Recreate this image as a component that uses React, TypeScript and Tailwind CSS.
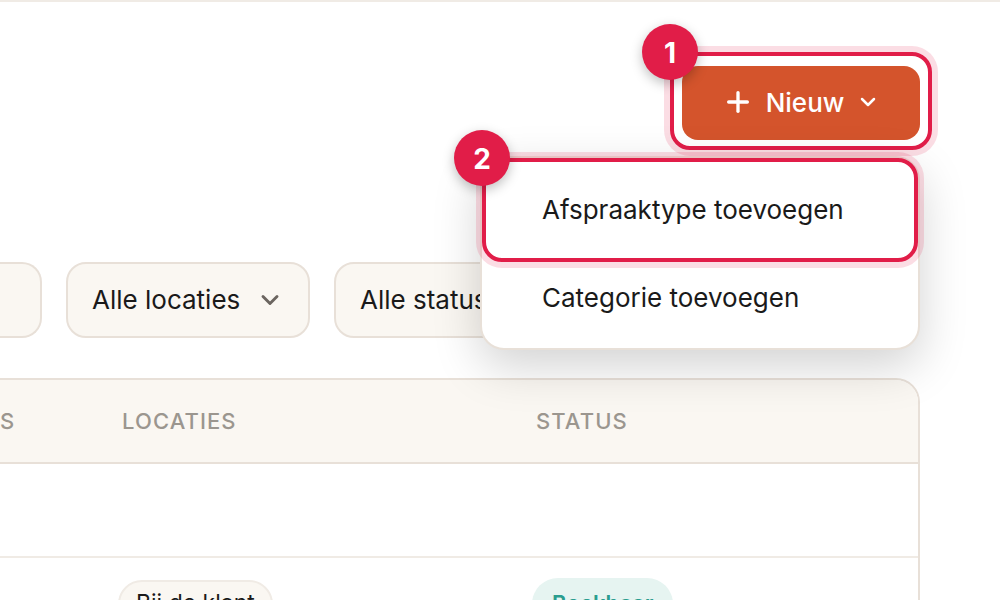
import React from 'react';
import { ChevronDown, Plus } from 'lucide-react';

interface FilterSelectProps {
  label: string;
  options: string[];
  className: string;
}

const FilterSelect: React.FC<FilterSelectProps> = ({ label, options, className }) => (
  <div className={`relative shrink-0 ${className}`}>
    <select
      aria-label={label}
      className="h-[76px] w-full appearance-none rounded-[20px] border-2 border-[#e8e0d8] bg-[#faf7f2] pb-[2px] pl-6 pr-16 text-[#1a1a1a]"
    >
      {options.map((option) => (
        <option key={option}>{option}</option>
      ))}
    </select>
    <ChevronDown size={28} strokeWidth={2.5} className="pointer-events-none absolute right-[26px] top-6 text-[#6b6560]" />
  </div>
);

interface StepMarkerProps {
  step: number;
  className: string;
}

// Numbered outline that lies over the control it points at
const StepMarker: React.FC<StepMarkerProps> = ({ step, className }) => (
  <div className={`pointer-events-none absolute rounded-[20px] border-4 border-[#e11d48] shadow-[0_0_0_6px_rgba(225,29,72,0.15)] ${className}`}>
    <span className="absolute -left-8 -top-8 flex size-14 items-center justify-center rounded-full bg-[#e11d48] pt-[2px] text-[28px] font-bold text-white shadow-[0_4px_12px_rgba(0,0,0,0.25)]">
      {step}
    </span>
  </div>
);

const NewMenu: React.FC = () => (
  <div className="relative">
    <button
      type="button"
      aria-haspopup="menu"
      aria-expanded="true"
      className="flex h-[74px] w-[238px] items-center justify-center gap-3 rounded-2xl bg-[#d4542c] pb-[2px] font-medium text-white"
    >
      <Plus size={32} strokeWidth={2.5} />
      Nieuw
      <ChevronDown size={24} strokeWidth={2.5} />
    </button>
    <StepMarker step={1} className="-inset-x-3 -bottom-[10px] -top-[14px]" />

    <div
      role="menu"
      className="absolute right-0 top-[90px] z-10 w-[440px] rounded-3xl border-2 border-[#e8e0d8] bg-white py-[7px] text-[#1a1a1a] shadow-[0_16px_48px_rgba(0,0,0,0.18)]"
    >
      <button type="button" role="menuitem" className="block h-[88px] w-full px-15 text-left">
        Afspraaktype toevoegen
      </button>
      <button type="button" role="menuitem" className="block h-[88px] w-full px-15 text-left">
        Categorie toevoegen
      </button>
      <StepMarker step={2} className="inset-x-0 top-0 h-[104px]" />
    </div>
  </div>
);

const AppointmentTable: React.FC = () => (
  <div className="mr-20 mt-10 overflow-hidden rounded-tr-3xl border-2 border-l-0 border-[#e8e0d8]">
    <table className="w-full table-fixed text-left text-[22px]">
      <thead className="bg-[#faf7f2] text-[#9b968f]">
        <tr className="h-[83px] border-b-2 border-[#e8e0d8] tracking-wider">
          <th className="w-[94px] pr-20 text-right font-medium">S</th>
          <th className="w-[414px] pl-7 font-medium">LOCATIES</th>
          <th className="pl-7 font-medium">STATUS</th>
        </tr>
      </thead>
      <tbody>
        <tr className="h-[94px] border-b-2 border-[#f0ebe5]">
          <td colSpan={3} />
        </tr>
        <tr className="h-[92px]">
          <td />
          <td className="pl-6">
            <span className="inline-flex h-12 items-center rounded-full border-2 border-[#f0ebe5] bg-[#faf7f2] px-4 text-[23px] text-[#1a1a1a]">
              Bij de klant
            </span>
          </td>
          <td className="pl-6">
            <span className="inline-flex h-[52px] items-center rounded-full bg-[#e6f4f1] px-5 font-semibold text-[#2a9d8f]">
              Boekbaar
            </span>
          </td>
        </tr>
      </tbody>
    </table>
  </div>
);

export default function App() {
  return (
    <main className="h-screen overflow-hidden border-t-2 border-[#f0ebe5] bg-white font-['Inter',sans-serif] text-[26px]">
      <header className="flex justify-end pr-20 pt-16">
        <NewMenu />
      </header>

      <div className="mt-[122px] flex gap-6">
        <div className="h-[76px] w-[42px] shrink-0 rounded-r-[20px] border-2 border-l-0 border-[#e8e0d8] bg-[#faf7f2]" />
        <FilterSelect label="Locatie" options={['Alle locaties']} className="w-[244px]" />
        <FilterSelect label="Status" options={['Alle statussen']} className="w-[264px]" />
      </div>

      <AppointmentTable />
    </main>
  );
}
